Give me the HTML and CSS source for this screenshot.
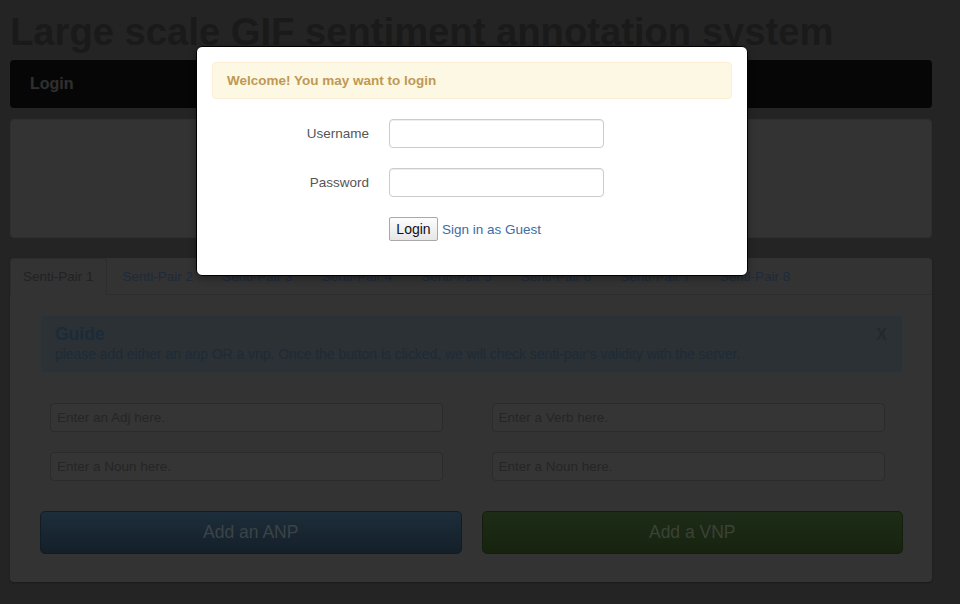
FILE: index.html
```html
<!DOCTYPE html>
<html lang="en">
<head>
<meta charset="utf-8">
<title>Large scale GIF sentiment annotation system</title>
<link rel="stylesheet" href="styles.css">
</head>
<body>
<div class="page">
  <h1 class="title">Large scale GIF sentiment annotation system</h1>
  <div class="navbar"><span class="brand">Login</span></div>
  <div class="well"></div>
  <div class="panel">
    <ul class="tabs">
      <li class="tab active">Senti-Pair 1</li>
      <li class="tab">Senti-Pair 2</li>
      <li class="tab">Senti-Pair 3</li>
      <li class="tab">Senti-Pair 4</li>
      <li class="tab">Senti-Pair 5</li>
      <li class="tab">Senti-Pair 6</li>
      <li class="tab">Senti-Pair 7</li>
      <li class="tab">Senti-Pair 8</li>
    </ul>
    <div class="tab-content">
      <div class="guide">
        <span class="close">X</span>
        <h4 class="guide-title">Guide</h4>
        <p class="guide-text">please add either an anp OR a vnp. Once the button is clicked, we will check senti-pair's validity with the server.</p>
      </div>
      <div class="pairs">
        <div class="pair">
          <input class="field" type="text" placeholder="Enter an Adj here.">
          <input class="field" type="text" placeholder="Enter a Noun here.">
          <button class="btn btn-anp" type="button">Add an ANP</button>
        </div>
        <div class="pair">
          <input class="field" type="text" placeholder="Enter a Verb here.">
          <input class="field" type="text" placeholder="Enter a Noun here.">
          <button class="btn btn-vnp" type="button">Add a VNP</button>
        </div>
      </div>
    </div>
  </div>
</div>
<div class="modal">
  <div class="notice">Welcome! You may want to login</div>
  <form class="login-form">
    <label class="label" for="user">Username</label>
    <input class="input" id="user" type="text">
    <label class="label" for="pass">Password</label>
    <input class="input" id="pass" type="password">
    <div class="actions">
      <button class="login-btn" type="button">Login</button>
      <a class="guest" href="#">Sign in as Guest</a>
    </div>
  </form>
</div>
</body>
</html>
```
FILE: styles.css
```css
/* The page below the login dialog is drawn in its dimmed (backdrop) colours. */
* { box-sizing: border-box; }
html, body { margin: 0; padding: 0; }
body {
  position: relative;
  background: #242424;
  font-family: "Liberation Sans", Arial, sans-serif;
  font-size: 13.5px;
  width: 960px;
  height: 604px;
  overflow: hidden;
}
.page {
  width: 922px;
  margin-left: 10px;
}
.title {
  margin: 12px 0 8px;
  font-size: 38.2px;
  line-height: 40px;
  font-weight: bold;
  color: #1a1a1a;
  white-space: nowrap;
}
.navbar {
  height: 48px;
  background: #060606;
  border-radius: 4px;
  padding-left: 20px;
}
.brand {
  line-height: 48px;
  font-size: 16px;
  font-weight: bold;
  color: #2f2f2f;
  text-shadow: 0 0 2px rgba(255,255,255,0.06);
}
.well {
  margin-top: 11px;
  height: 119px;
  background: #333333;
  border: 1px solid #2f2f2f;
  border-radius: 4px;
}
.panel {
  margin-top: 20px;
  height: 324px;
  background: #333333;
  border-radius: 4px;
  box-shadow: 0 1px 2px rgba(0,0,0,0.3);
}
.tabs {
  list-style: none;
  margin: 0;
  padding: 0;
  display: flex;
  border-bottom: 1px solid #2d2d2d;
}
.tab {
  padding: 0 12px;
  line-height: 36px;
  border: 1px solid transparent;
  border-bottom: none;
  margin-right: 3px;
  margin-bottom: -1px;
  color: #1e2a3b;
  white-space: nowrap;
}
.tab.active {
  color: #222222;
  background: #333333;
  border-color: #2d2d2d;
  border-top-left-radius: 4px;
  border-top-right-radius: 4px;
  height: 37px;
}
.tab-content {
  padding: 20px 29px 29px 30px;
}
.guide {
  position: relative;
  background: #2b3134;
  border: 1px solid #2e3539;
  border-radius: 4px;
  padding: 8px 35px 8px 14px;
}
.guide-title {
  margin: 0;
  font-size: 17.5px;
  line-height: 20px;
  font-weight: bold;
  color: #1c2b39;
}
.guide-text {
  margin: 0;
  font-size: 13.9px;
  line-height: 20px;
  color: #1e2b37;
}
.close {
  position: absolute;
  top: 9px;
  right: 15px;
  font-size: 16px;
  font-weight: bold;
  line-height: 20px;
  color: #25292c;
}
.pairs {
  margin-top: 30px;
  display: grid;
  grid-template-columns: 1fr 1fr;
  column-gap: 20px;
}
.pair {
  display: flex;
  flex-direction: column;
}
.field {
  display: block;
  margin: 0 0 20px 10px;
  width: 393px;
  height: 29px;
  padding: 4px 6px;
  font-family: inherit;
  font-size: 13.5px;
  background: #353535;
  border: 1px solid #2b2b2b;
  border-radius: 4px;
  color: #1a1a1a;
}
.field::placeholder { color: #252525; opacity: 1; }
.field + .field { margin-bottom: 30px; }
.btn {
  display: block;
  width: 100%;
  height: 43px;
  font-family: inherit;
  font-size: 17.5px;
  border-radius: 5px;
  cursor: pointer;
}
.btn-anp {
  background: linear-gradient(#1d2e3a, #141f29);
  border: 1px solid #131b24;
  color: #3c4347;
}
.btn-vnp {
  background: linear-gradient(#1d2c17, #17230f);
  border: 1px solid #141e0e;
  color: #3b4237;
}
.modal {
  position: absolute;
  left: 196px;
  top: 46px;
  width: 552px;
  height: 230px;
  background: #fff;
  border: 1px solid #000;
  border-radius: 6px;
  box-shadow: 0 3px 7px rgba(0,0,0,0.3);
  padding: 15px 15px 0;
}
.notice {
  height: 37px;
  line-height: 35px;
  padding: 0 14px;
  background: #fcf8e3;
  border: 1px solid #fbeed5;
  border-radius: 4px;
  color: #c09853;
  font-weight: bold;
  font-size: 13.5px;
}
.login-form {
  margin-top: 20px;
  display: grid;
  grid-template-columns: 157px 215px;
  column-gap: 20px;
  row-gap: 20px;
  align-items: center;
}
.label {
  text-align: right;
  color: #555;
  font-size: 13.5px;
  line-height: 29px;
}
.input {
  width: 215px;
  height: 29px;
  border: 1px solid #ccc;
  border-radius: 4px;
  padding: 4px 6px;
  font-family: inherit;
  font-size: 13.5px;
  box-shadow: inset 0 1px 1px rgba(0,0,0,0.075);
}
.actions {
  grid-column: 2;
  display: flex;
  align-items: center;
  white-space: nowrap;
}
.login-btn {
  width: 49px;
  height: 24px;
  padding: 0;
  font-family: inherit;
  font-size: 14px;
  color: #111;
  background: linear-gradient(#fdfdfd, #e6e6e6);
  border: 1px solid #a8a8a8;
  border-radius: 2px;
}
.guest {
  margin-left: 4px;
  color: #3d6ba6;
  text-decoration: none;
  font-size: 13.5px;
}
```
